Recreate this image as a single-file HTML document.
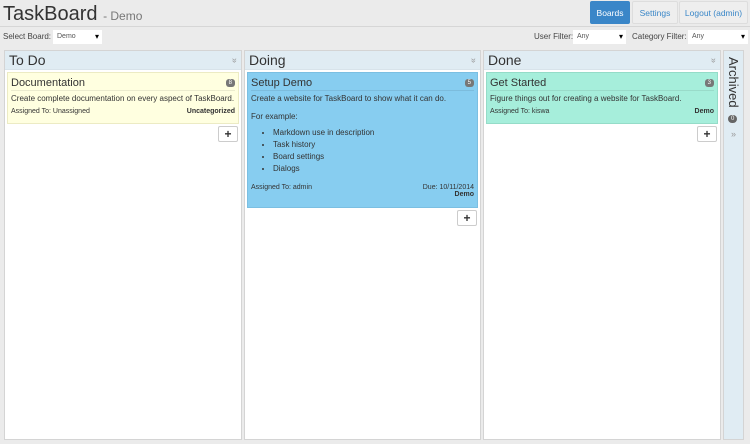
<!DOCTYPE html>
<html><head><style>
*{box-sizing:border-box;margin:0;padding:0}
body{width:750px;height:444px;background:#ebebeb;font-family:"Liberation Sans",sans-serif;color:#333;position:relative;overflow:hidden}
.hdr{position:absolute;left:0;top:0;width:750px;height:27px;border-bottom:1px solid #d6d6d6}
.title{position:absolute;left:3px;top:3px;font-size:20px;color:#333}
.title small{font-size:12px;color:#777}
.btn{position:absolute;top:1px;height:23px;font-size:8.5px;line-height:23px;text-align:center;border-radius:2px;color:#3a87c8;background:#eee;border:1px solid #ddd}
.sel{position:absolute;top:30px;height:14px;background:#fff;font-size:7px;color:#555;line-height:14px;padding-left:4px}
.sel:after{content:"▾";position:absolute;right:3px;font-size:8px;color:#000}
.lbl{position:absolute;top:32px;font-size:8px;color:#444;white-space:nowrap}
.col{position:absolute;top:50px;height:390px;background:#fff;border:1px solid #d4d4d4}
.ch{height:19px;background:#e0ecf3;font-size:14px;padding-left:4px;line-height:19px;border-bottom:1px solid #d8e3ea;position:relative}
.ch:after{content:"»";transform:rotate(90deg);position:absolute;right:4px;top:0;font-size:9px;color:#999}
.card{position:absolute;left:2px;right:2px;top:21px;padding:4px 3px;font-size:8px}
.ct{font-size:11px;border-bottom:1px solid rgba(0,0,0,.08);padding-bottom:1px;margin-bottom:3px;position:relative}
.bd{position:absolute;right:0;top:2px;background:#777;color:#fff;font-size:6px;border-radius:3px;padding:1px 3px}
.meta{font-size:7px;margin-top:5px;display:flex;justify-content:space-between}
.plus{position:absolute;right:3px;width:20px;height:16px;border:1px solid #ccc;border-radius:2px;background:#fff;text-align:center;font-size:12px;font-weight:bold;line-height:14px}
ul{margin:7px 0 0 22px}li{margin-bottom:3px;line-height:9px}
</style></head><body>
<div class="hdr">
<div class="title">TaskBoard <small>- Demo</small></div>
<div class="btn" style="left:590px;width:40px;background:#3a86c8;color:#fff;border-color:#3a86c8">Boards</div>
<div class="btn" style="left:632px;width:46px">Settings</div>
<div class="btn" style="left:679px;width:69px">Logout (admin)</div>
</div>
<div class="lbl" style="left:3px">Select Board:</div>
<div class="sel" style="left:53px;width:49px">Demo</div>
<div class="lbl" style="left:534px">User Filter:</div>
<div class="sel" style="left:573px;width:53px">Any</div>
<div class="lbl" style="left:632px">Category Filter:</div>
<div class="sel" style="left:688px;width:60px">Any</div>

<div class="col" style="left:4px;width:238px"><div class="ch">To Do</div>
<div class="card" style="background:#ffffe0;height:52px;border:1px solid #ecebc4"><div class="ct">Documentation<span class="bd">8</span></div>
<div>Create complete documentation on every aspect of TaskBoard.</div>
<div class="meta"><span>Assigned To: Unassigned</span><b>Uncategorized</b></div></div>
<div class="plus" style="top:75px">+</div></div>

<div class="col" style="left:244px;width:237px"><div class="ch">Doing</div>
<div class="card" style="background:#87cdf0;height:136px;border:1px solid #7bbfe2"><div class="ct">Setup Demo<span class="bd">5</span></div>
<div>Create a website for TaskBoard to show what it can do.</div>
<div style="margin-top:9px">For example:</div>
<ul><li>Markdown use in description</li><li>Task history</li><li>Board settings</li><li>Dialogs</li></ul>
<div class="meta" style="margin-top:11px"><span>Assigned To: admin</span><span style="text-align:right">Due: 10/11/2014<br><b>Demo</b></span></div></div>
<div class="plus" style="top:159px">+</div></div>

<div class="col" style="left:483px;width:238px"><div class="ch">Done</div>
<div class="card" style="background:#a6eedb;height:52px;border:1px solid #95dcc8"><div class="ct">Get Started<span class="bd">3</span></div>
<div>Figure things out for creating a website for TaskBoard.</div>
<div class="meta"><span>Assigned To: kiswa</span><b>Demo</b></div></div>
<div class="plus" style="top:75px">+</div></div>

<div class="col" style="left:723px;width:21px;background:#e0ecf3">
<div style="position:absolute;left:2px;top:6px;writing-mode:vertical-rl;font-size:13px">Archived</div>
<div style="position:absolute;left:4px;top:64px;background:#666;color:#fff;font-size:6px;border-radius:4px;padding:1px 3px">0</div>
<div style="position:absolute;left:7px;top:78px;font-size:9px;color:#999">»</div>
</div>
</body></html>
